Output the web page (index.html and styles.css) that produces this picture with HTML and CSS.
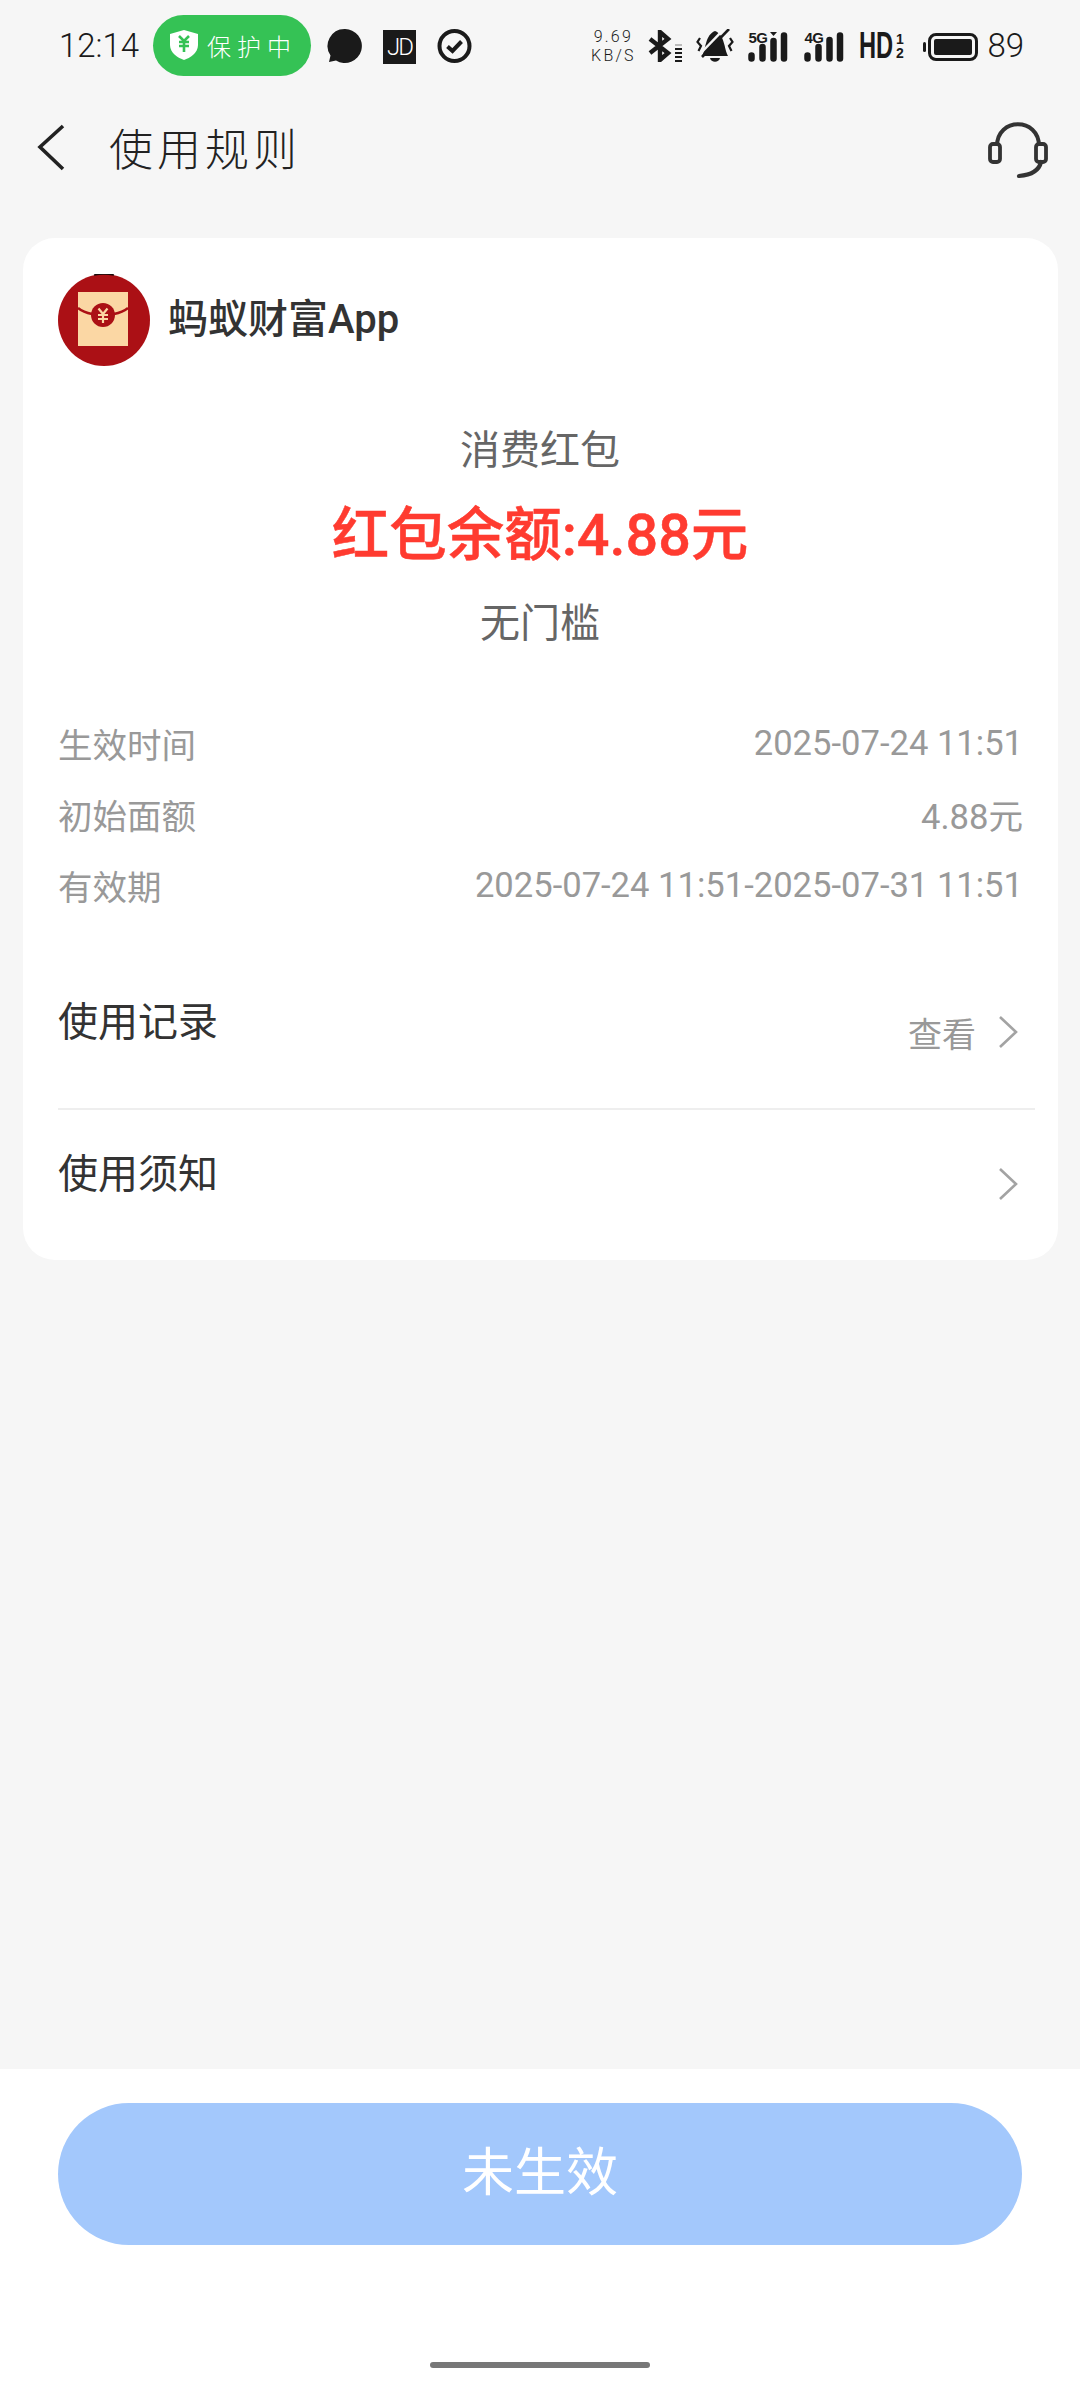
FILE: index.html
```html
<!DOCTYPE html>
<html lang="zh">
<head>
<meta charset="utf-8">
<title>使用规则</title>
<link rel="stylesheet" href="styles.css">
</head>
<body>
<div class="page">
  <div class="status">
    <span class="time">12:14</span>
    <span class="pill">
      <svg class="shield" viewBox="0 0 28 30"><path d="M14 0 L28 4 V15 C28 23 20 28 14 30 C8 28 0 23 0 15 V4 Z" fill="#fff"/><path d="M9 6 L14 11 L19 6 M14 11 V22 M9 12 H19 M9 16 H19" stroke="#35c255" stroke-width="2.6" fill="none"/></svg>
      <span class="pill-text">保护中</span>
    </span>
    <svg class="st-icon first" viewBox="0 0 35 34"><path d="M17.5 0 A17 17 0 1 1 9 31.5 L2 33 L3.5 26.5 A17 17 0 0 1 17.5 0 Z" fill="#1a1a1a"/></svg>
    <span class="jd">JD</span>
    <svg class="st-icon" viewBox="0 0 35 34"><circle cx="17.5" cy="17" r="15" fill="none" stroke="#1a1a1a" stroke-width="4"/><path d="M10.5 17.5 L15.5 22 L24.5 12.5" fill="none" stroke="#1a1a1a" stroke-width="4"/></svg>
    <span class="spacer"></span>
    <span class="speed">9.69<br>KB/S</span>
    <svg class="bt" viewBox="0 0 35 32"><path d="M2 9 L20 23 L12 30 V2 L20 9 L2 23" fill="none" stroke="#1a1a1a" stroke-width="4.4"/><path d="M27 15h7" stroke="#bbb" stroke-width="2"/><path d="M27 19h7M27 23h7M27 27h7M27 31h7" stroke="#1a1a1a" stroke-width="2"/></svg>
    <svg class="bell" viewBox="0 0 38 34"><path d="M6 27 C10 20 9 6 19 2 C29 6 28 20 32 27 Z" fill="#1a1a1a"/><path d="M14 29 H24 C23 34 15 34 14 29 Z" fill="#1a1a1a"/><path d="M3 26 L29 -1" stroke="#f6f6f6" stroke-width="2.500"/><path d="M6 28 L33 0" stroke="#1a1a1a" stroke-width="2.600"/><path d="M4 9 L1.500 13 L5 17 L2.500 22M34 9 L36.500 13 L33 17 L35.500 22" fill="none" stroke="#1a1a1a" stroke-width="2.200"/></svg>
    <span class="sig"><svg viewBox="0 0 40 30"><path d="M3.5 23.5v3M14.5 15v11.5M25.5 9v17.5M36 3.5v23" stroke="#1a1a1a" stroke-width="6.5" stroke-linecap="round"/><path d="M22 0h7l-3.500 4z" fill="#1a1a1a"/></svg><b>5G</b></span>
    <span class="sig sig2"><svg viewBox="0 0 40 30"><path d="M3.5 23.5v3M14.5 15v11.5M25.5 8v18.5M36 3.500v23" stroke="#1a1a1a" stroke-width="6.500" stroke-linecap="round"/></svg><b>4G</b></span>
    <span class="hd"><span class="hd-text">HD</span><span class="frac">1<br>2</span></span>
    <span class="battery"><span class="batt-fill"></span></span>
    <span class="pct">89</span>
  </div>

  <header class="nav">
    <svg class="back" viewBox="0 0 30 50"><path d="M27 3 L4 24 L27 46" fill="none" stroke="#222" stroke-width="3.6"/></svg>
    <h1 class="title">使用规则</h1>
    <svg class="support" viewBox="0 0 60 60"><path d="M9 26 C9 -3 51 -3 51 26" fill="none" stroke="#333" stroke-width="4"/><rect x="2" y="24" width="10" height="18" rx="3" fill="none" stroke="#333" stroke-width="3.8"/><rect x="48" y="24" width="10" height="18" rx="3" fill="none" stroke="#333" stroke-width="3.8"/><path d="M53 42 C51 51 43 55 31 56" fill="none" stroke="#333" stroke-width="4.2" stroke-linecap="round"/></svg>
  </header>

  <main class="card">
    <div class="brand">
      <svg class="logo" viewBox="0 0 92 92"><circle cx="46" cy="46" r="46" fill="#ab1015"/><path d="M36 1 A46 46 0 0 1 56 1" fill="none" stroke="#1a0a0a" stroke-width="1.500"/><rect x="20" y="18" width="50" height="54" fill="#fbd7a4"/><path d="M20 34 C25 38 29 39 34 40 M70 34 C65 38 61 39 56 40" fill="none" stroke="#ab1015" stroke-width="2.600"/><circle cx="45" cy="41" r="12" fill="#ab1015"/><path d="M40.500 34.500 L45 40 L49.500 34.500 M45 40 V49 M40 41 H50 M40 45 H50" stroke="#fbd7a4" stroke-width="2.200" fill="none"/></svg>
      <span class="brand-name">蚂蚁财富App</span>
    </div>
    <div class="summary">
      <div class="kind">消费红包</div>
      <div class="balance">红包余额:4.88元</div>
      <div class="kind limit">无门槛</div>
    </div>
    <dl class="details">
      <div class="detail"><dt>生效时间</dt><dd>2025-07-24 11:51</dd></div>
      <div class="detail"><dt>初始面额</dt><dd>4.88元</dd></div>
      <div class="detail"><dt>有效期</dt><dd>2025-07-24 11:51-2025-07-31 11:51</dd></div>
    </dl>
    <div class="link link-first">
      <span class="link-label">使用记录</span>
      <span class="link-side"><span class="link-note">查看</span>
        <svg class="chev" viewBox="0 0 20 34"><path d="M2 2 L18 17 L2 32" fill="none" stroke="#a3a3a3" stroke-width="2.6"/></svg></span>
    </div>
    <div class="link link-last">
      <span class="link-label">使用须知</span>
      <span class="link-side"><svg class="chev" viewBox="0 0 20 34"><path d="M2 2 L18 17 L2 32" fill="none" stroke="#a3a3a3" stroke-width="2.6"/></svg></span>
    </div>
  </main>

  <footer class="footer">
    <button class="cta" type="button">未生效</button>
    <div class="home-bar"></div>
  </footer>
</div>
</body>
</html>
```
FILE: styles.css
```css
* { box-sizing: border-box; }
html, body { margin: 0; padding: 0; }
body {
  width: 1080px;
  height: 2400px;
  background: #f6f6f6;
  font-family: Roboto, "Noto Sans CJK SC", sans-serif;
  overflow: hidden;
}
.page { display: flex; flex-direction: column; height: 2400px; }

/* status bar */
.status {
  height: 92px;
  padding: 15px 56px 0 59px;
  display: flex;
  align-items: flex-start;
  color: #1a1a1a;
  flex: none;
}
.time { width: 94px; font-size: 33px; font-weight: 300; line-height: 61px; flex: none; }
.pill {
  width: 158px; height: 61px;
  border-radius: 31px; background: #35c255; color: #fff;
  display: flex; align-items: center; padding-left: 17px;
  flex: none;
}
.shield { width: 28px; height: 30px; flex: none; margin-top: -2px; }
.pill-text { font-size: 24px; font-weight: 300; letter-spacing: 6px; margin-left: 9px; white-space: nowrap; line-height: 1; font-family: "Noto Sans CJK SC", sans-serif; }
.st-icon { width: 35px; height: 34px; margin: 14px 0 0 21px; flex: none; }
.st-icon.first { margin-left: 16px; }
.jd {
  width: 33px; height: 34px; margin: 15px 0 0 21px; background: #1a1a1a; color: #fff;
  font-size: 24px; font-weight: 300; text-align: center; line-height: 34px; letter-spacing: -2px; flex: none;
}
.spacer { flex: 1; }
.speed { display: block; width: 46px; text-align: center; font-size: 16px; line-height: 19px; letter-spacing: 2.2px; margin-top: 12px; font-weight: 300; white-space: nowrap; flex: none; }
.bt { width: 35px; height: 32px; margin: 15px 0 0 12px; flex: none; }
.bell { width: 38px; height: 34px; margin: 14px 0 0 13px; flex: none; }
.sig { position: relative; width: 40px; height: 30px; margin: 17px 0 0 14px; flex: none; display: block; }
.sig2 { margin-left: 16px; }
.sig svg { display: block; width: 40px; height: 30px; }
.sig b { position: absolute; left: 0; top: -1px; font-family: "Liberation Sans Narrow", "Liberation Sans", sans-serif; font-size: 15px; line-height: 14px; font-weight: 700; letter-spacing: -.5px; }
.hd { display: flex; align-items: center; margin: 17px 0 0 15px; width: 45px; height: 28px; flex: none; }
.hd-text { display: block; font-family: "Liberation Sans", sans-serif; font-size: 37px; line-height: 28px; font-weight: 700; width: 36px; white-space: nowrap; transform: scaleX(.64); transform-origin: left center; }
.frac { display: block; font-family: "Liberation Sans", sans-serif; font-size: 14px; line-height: 14px; font-weight: 700; width: 9px; text-align: center; }
.battery { position: relative; width: 50px; height: 28px; margin: 18px 0 0 24px; border: 3px solid #1a1a1a; border-radius: 8px; padding: 3px; flex: none; }
.battery::before { content: ""; position: absolute; left: -8px; top: 6px; width: 3px; height: 10px; background: #1a1a1a; border-radius: 2px; }
.batt-fill { display: block; height: 100%; width: 100%; background: #1a1a1a; border-radius: 2px; }
.pct { margin-left: 9px; font-size: 33px; font-weight: 300; line-height: 61px; flex: none; }

/* nav */
.nav { height: 56px; flex: none; display: flex; align-items: center; padding: 0 0 0 36px; margin-top: 28px; }
.back { width: 30px; height: 50px; flex: none; }
.title { margin: -2px 0 0 43px; font-size: 44px; font-weight: 300; letter-spacing: 4px; color: #222; line-height: 56px; font-family: "Noto Sans CJK SC", sans-serif; }
.support { width: 60px; height: 60px; margin: 3px 32px 0 auto; flex: none; }

/* card */
.card {
  margin: 62px 22px 0 23px;
  height: 1022px;
  background: #fff;
  border-radius: 32px;
  padding: 36px 23px 0 35px;
  flex: none;
}
.brand { display: flex; align-items: center; height: 92px; }
.logo { width: 92px; height: 92px; flex: none; }
.brand-name { margin-left: 18px; font-size: 40px; font-weight: 500; color: #333; line-height: 92px; }
.summary { text-align: center; margin-left: -18px; padding-top: 58px; width: 1000px; }
.kind { font-size: 40px; line-height: 54px; color: #666; }
.balance { font-size: 57.500px; line-height: 72px; margin-top: 22px; font-weight: 500; color: #ff3b30; -webkit-text-stroke: .5px #ff3b30; }
.limit { margin-top: 25px; }
.details { margin: 56px 0 0; padding-right: 12px; }
.detail { display: flex; justify-content: space-between; height: 71px; align-items: center; }
.detail dt { font-size: 34.5px; color: #999; }
.detail dd { margin: 0; font-size: 34.6px; color: #999; }
.link { display: flex; justify-content: space-between; align-items: flex-start; }
.link-first { height: 166px; margin-top: 24px; border-bottom: 2px solid #eee; padding-top: 51px; }
.link-last { height: 103px; padding-top: 37px; }
.link-label { font-size: 40px; line-height: 56px; color: #333; }
.link-side { display: flex; align-items: center; height: 34px; margin-top: 20px; padding-right: 17px; }
.link-note { font-size: 34px; color: #999; margin-right: 22px; }
.chev { width: 20px; height: 34px; display: block; flex: none; }

/* footer */
.footer { margin-top: auto; height: 331px; background: #fff; padding: 34px 58px 0; flex: none; display: flex; flex-direction: column; align-items: center; }
.cta { width: 964px; height: 142px; border: 0; border-radius: 71px; background: #a3c8fc; color: #fff; font-family: Roboto, "Noto Sans CJK SC", sans-serif; font-size: 52px; padding: 0 0 12px; flex: none; }
.home-bar { width: 220px; height: 6px; border-radius: 3px; background: #777; margin-top: 117px; flex: none; }
```
